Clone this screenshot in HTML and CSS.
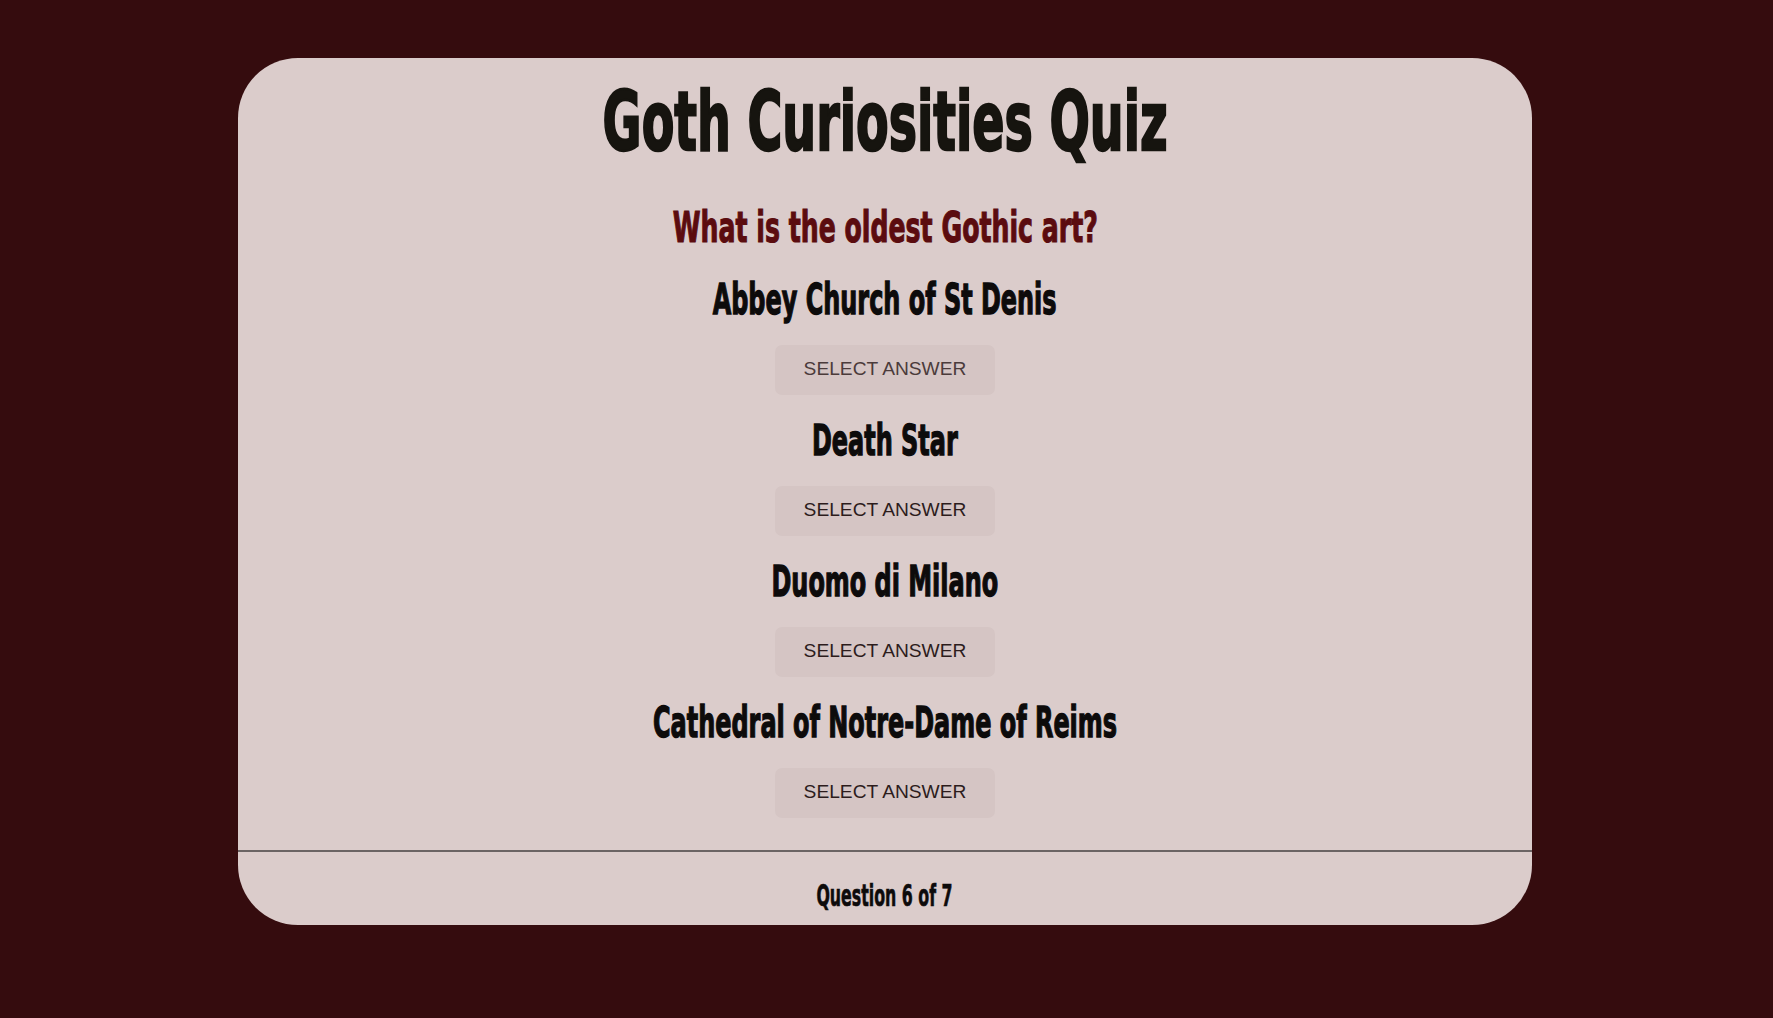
FILE: index.html
```html
<!DOCTYPE html>
<html lang="en">
<head>
<meta charset="utf-8">
<title>Goth Curiosities Quiz</title>
<link rel="stylesheet" href="styles.css">
</head>
<body>
<main class="card">
  <h1 class="title"><span class="squeeze">Goth Curiosities Quiz</span></h1>
  <h2 class="question"><span class="squeeze">What is the oldest Gothic art?</span></h2>
  <section class="answers">
    <div class="answer">
      <h3 class="answer-text"><span class="squeeze">Abbey Church of St Denis</span></h3>
      <button class="select-btn select-btn--hover">SELECT ANSWER</button>
    </div>
    <div class="answer">
      <h3 class="answer-text"><span class="squeeze">Death Star</span></h3>
      <button class="select-btn">SELECT ANSWER</button>
    </div>
    <div class="answer">
      <h3 class="answer-text"><span class="squeeze">Duomo di Milano</span></h3>
      <button class="select-btn">SELECT ANSWER</button>
    </div>
    <div class="answer">
      <h3 class="answer-text"><span class="squeeze">Cathedral of Notre-Dame of Reims</span></h3>
      <button class="select-btn">SELECT ANSWER</button>
    </div>
  </section>
  <hr class="divider">
  <footer class="progress"><span class="squeeze">Question 6 of 7</span></footer>
</main>
</body>
</html>
```
FILE: styles.css
```css
html, body {
  margin: 0;
  padding: 0;
}
body {
  background: #350c0e;
  min-height: 1018px;
  font-family: "DejaVu Sans", "Liberation Sans", sans-serif;
}
.card {
  width: 1294px;
  margin: 58px 0 0 238px;
  background: #dbcccb;
  border-radius: 60px;
  padding: 0 0 14px;
  display: flex;
  flex-direction: column;
  align-items: center;
  overflow: hidden;
}
.squeeze {
  display: inline-block;
  transform-origin: center;
  white-space: nowrap;
}
.title, .question, .answer-text, .progress {
  font-family: "DejaVu Sans", sans-serif;
  font-weight: 700;
  line-height: 1;
  margin: 0;
  text-align: center;
}
.title {
  font-size: 82px;
  color: #16140f;
  margin-top: 23px;
  -webkit-text-stroke: 2.5px #16140f;
}
.title .squeeze { transform: scaleX(0.58); }
.question {
  font-size: 42px;
  color: #5b0c0f;
  margin-top: 44px;
  -webkit-text-stroke: 1.2px #5b0c0f;
}
.question .squeeze { transform: scaleX(0.6); }
.answers {
  display: flex;
  flex-direction: column;
  align-items: center;
  margin-top: 5px;
}
.answer {
  display: flex;
  flex-direction: column;
  align-items: center;
  gap: 24px;
  margin-top: 25px;
}
.answer-text {
  font-size: 42px;
  color: #0d0b0b;
  -webkit-text-stroke: 1.4px #0d0b0b;
}
.answer-text .squeeze { transform: scaleX(0.57); }
.select-btn {
  font-family: "Liberation Sans", Arial, sans-serif;
  font-size: 19.2px;
  line-height: 22px;
  padding: 13px 28.8px 15px;
  border: none;
  border-radius: 7px;
  background: #d5c5c4;
  color: #2c1c1c;
  cursor: pointer;
}
.select-btn--hover {
  color: #4b3b3b;
}
.divider {
  align-self: stretch;
  border: none;
  border-top: 2px solid #6b6464;
  margin: 32px 0 0;
  height: 0;
}
.progress {
  font-size: 31px;
  color: #0d0b0b;
  margin-top: 28px;
  -webkit-text-stroke: 0.7px #0d0b0b;
}
.progress .squeeze { transform: scaleX(0.51); }
```
